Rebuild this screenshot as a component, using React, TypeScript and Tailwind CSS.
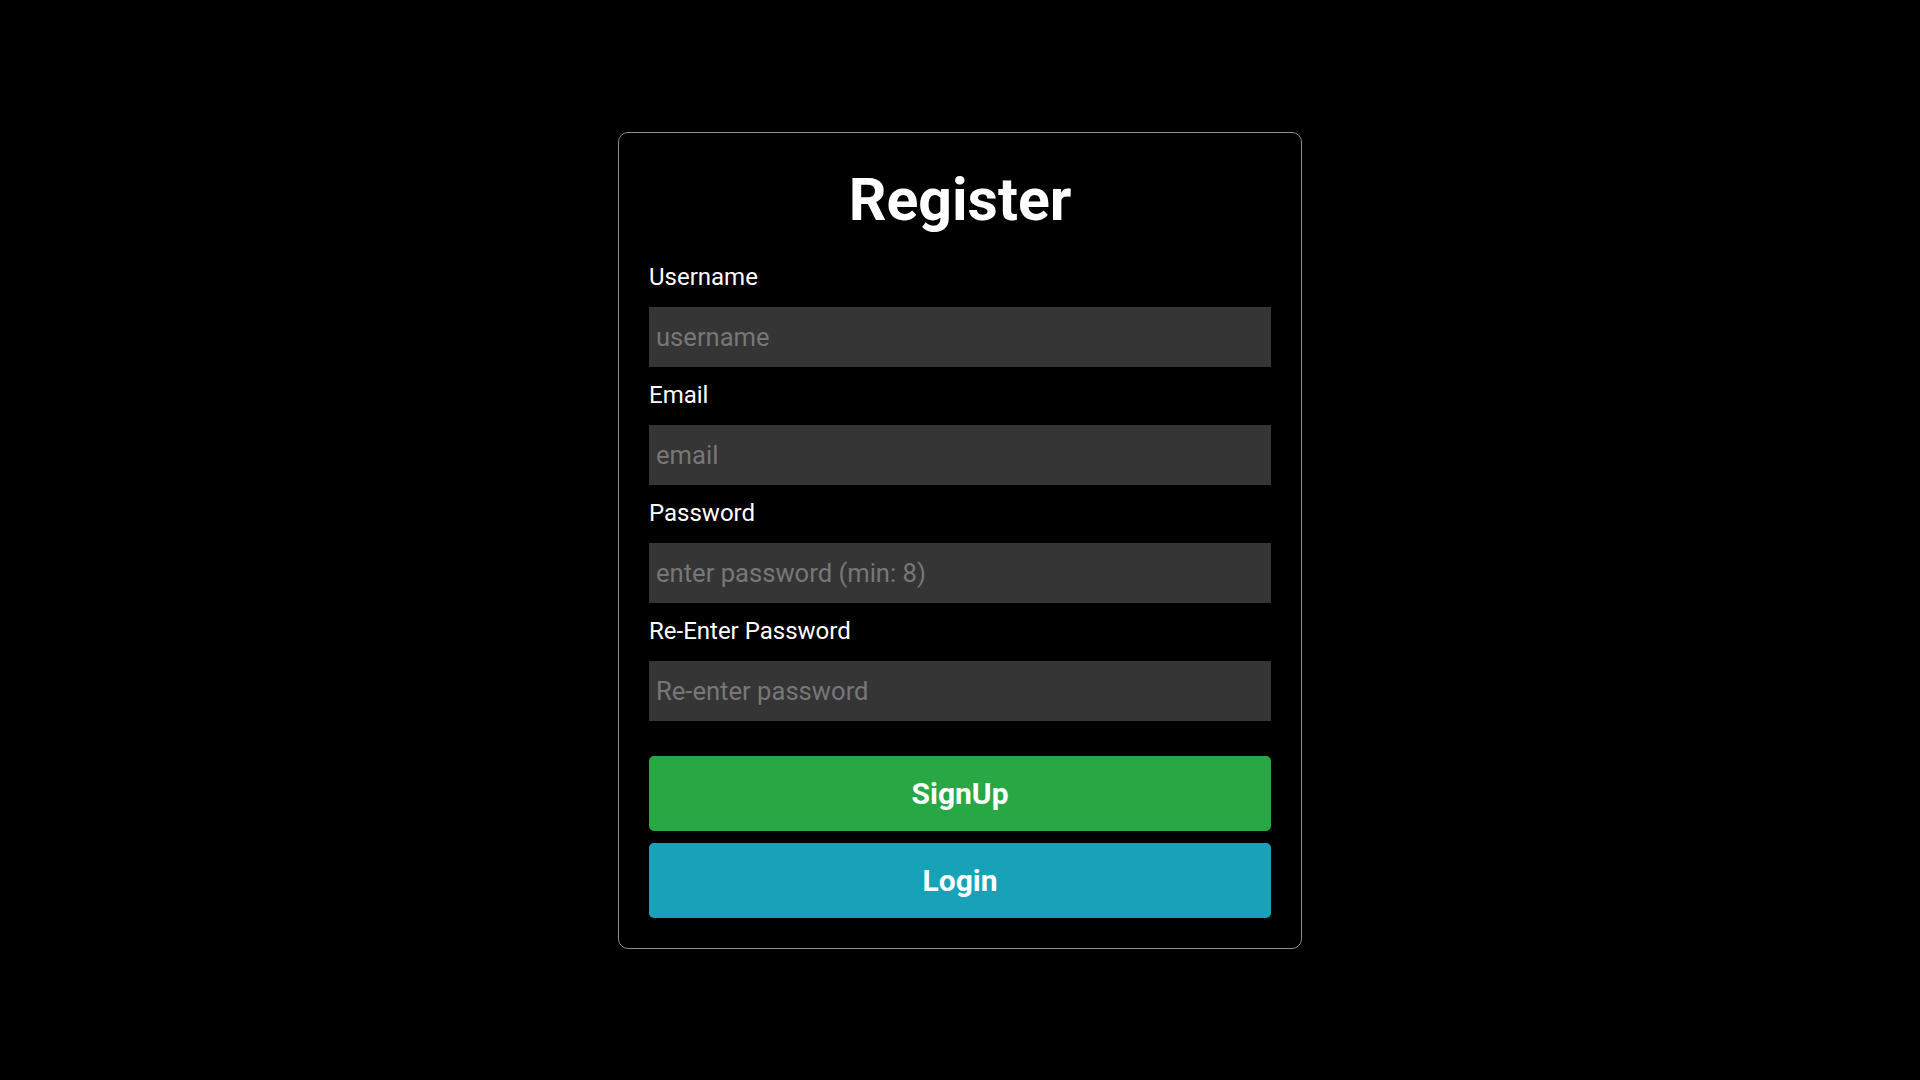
import React from "react";

const fields = [
  { label: "Username", placeholder: "username", type: "text" },
  { label: "Email", placeholder: "email", type: "email" },
  { label: "Password", placeholder: "enter password (min: 8)", type: "password" },
  { label: "Re-Enter Password", placeholder: "Re-enter password", type: "password" },
];

export default function App() {
  return (
    <div
      className="min-h-screen w-full bg-black flex items-center justify-center"
      style={{ fontFamily: "Roboto, 'Liberation Sans', sans-serif" }}
    >
      <form
        className="w-[684px] border border-[#8c8c8c] rounded-[10px] px-[30px] pt-[30px] pb-[30px] flex flex-col"
        onSubmit={(e) => e.preventDefault()}
      >
        <h1 className="mt-[2px] text-[59px] leading-[70px] font-bold text-white text-center">
          Register
        </h1>
        <div className="mt-[28px] flex flex-col">
          {fields.map((f, i) => (
            <div key={f.label} className={i > 0 ? "mt-[14px] flex flex-col" : "flex flex-col"}>
              <label className="text-[24px] leading-[28px] text-white">{f.label}</label>
              <input
                type={f.type}
                placeholder={f.placeholder}
                className="mt-[16px] h-[60px] w-full bg-[#353535] px-[7px] text-[25.6px] text-white placeholder:text-[#777777] outline-none border-0"
                style={{ fontFamily: "Roboto, 'Liberation Sans', sans-serif" }}
              />
            </div>
          ))}
        </div>
        <button
          type="submit"
          className="mt-[35px] h-[75px] w-full rounded-[5px] bg-[#28a745] text-white text-[30px] font-bold"
        >
          SignUp
        </button>
        <button
          type="button"
          className="mt-[12px] h-[75px] w-full rounded-[5px] bg-[#17a2b8] text-white text-[30px] font-bold"
        >
          Login
        </button>
      </form>
    </div>
  );
}
